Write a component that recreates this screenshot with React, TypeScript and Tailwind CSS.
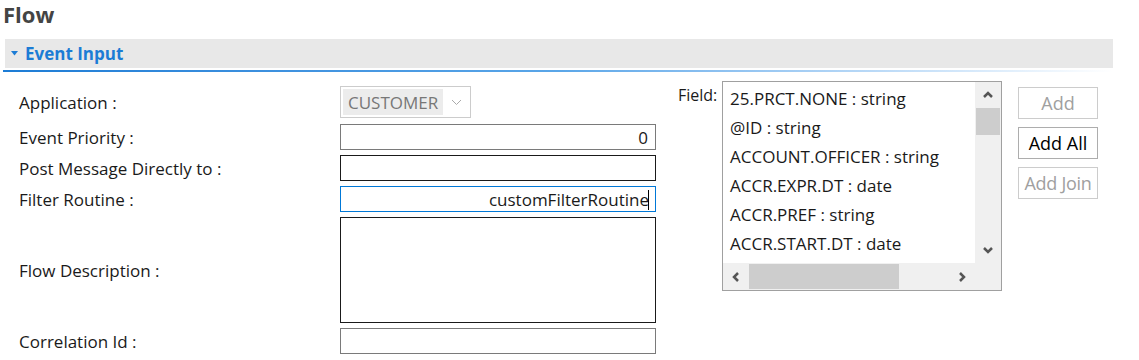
const font = { fontFamily: '"Segoe UI", "Open Sans", "Noto Sans", sans-serif' };

const fields = [
  "25.PRCT.NONE : string",
  "@ID : string",
  "ACCOUNT.OFFICER : string",
  "ACCR.EXPR.DT : date",
  "ACCR.PREF : string",
  "ACCR.START.DT : date",
];

function Chevron({ dir }: { dir: "up" | "down" | "left" | "right" }) {
  const d = {
    up: "M2 8 L6 4 L10 8",
    down: "M2 4 L6 8 L10 4",
    left: "M8 2 L4 6 L8 10",
    right: "M4 2 L8 6 L4 10",
  }[dir];
  return (
    <svg width="12" height="12" viewBox="0 0 12 12">
      <path d={d} fill="none" stroke="#555555" strokeWidth="2.5" />
    </svg>
  );
}

function Label({ children, h }: { children: string; h: string }) {
  return <div className={`flex items-center pt-[2px] ${h} text-[17px] text-[#1a1a1a]`}>{children}</div>;
}

export default function App() {
  return (
    <div className="w-[1139px] h-[360px] bg-white overflow-hidden text-[#1a1a1a]" style={font}>
      {/* Title */}
      <div className="h-[39px] pl-[3px] pt-[1px] text-[22px] font-bold text-[#444444] leading-[26px]">Flow</div>

      {/* Section header */}
      <div className="ml-[5px] w-[1108px] h-[29px] bg-[#e8e8e8] flex items-center gap-[7px] pl-[6px]">
        <svg width="7" height="5" viewBox="0 0 7 5">
          <path d="M0 0 L7 0 L3.5 4.5 Z" fill="#1c7cd5" />
        </svg>
        <span className="text-[17px] font-bold text-[#1c7cd5]">Event Input</span>
      </div>
      <div className="ml-[3px] mt-[2px] w-[1110px] h-[2px] bg-gradient-to-r from-[#1c7cd5] via-[#5aa6e8] to-[#ffffff]" />

      {/* Form body */}
      <div className="flex mt-[9px]">
        {/* Left form */}
        <div className="grid grid-cols-[321px_316px] pl-[19px] pt-[5px] gap-y-[5px]">
          <Label h="h-[32px]">Application :</Label>
          <div className="h-[32px] w-[131px] border border-[#cccccc] flex items-center pl-[2px] pr-[8px] justify-between">
            <span className="h-[26px] w-[100px] bg-[#ececec] text-[#777777] text-[17px] flex items-center pl-[5px] pt-[1px]">CUSTOMER</span>
            <svg width="11" height="7" viewBox="0 0 11 7">
              <path d="M1 1 L5.5 5.5 L10 1" fill="none" stroke="#aaaaaa" strokeWidth="1" />
            </svg>
          </div>

          <Label h="h-[26px] mt-[1px]">Event Priority :</Label>
          <div className="h-[26px] mt-[1px] border border-[#7a7a7a] flex items-center justify-end pr-[7px] pt-[1px] text-[17px]">0</div>

          <Label h="h-[26px]">Post Message Directly to :</Label>
          <div className="h-[26px] border border-[#1a1a1a]" />

          <Label h="h-[26px]">Filter Routine :</Label>
          <div className="h-[26px] border border-[#0078d7] flex items-center justify-end pr-[6px] pt-[1px] text-[17px]">
            <span>customFilterRoutine</span>
            <span className="w-px h-[20px] bg-black -ml-[1px]" />
          </div>

          <Label h="h-[106px]">Flow Description :</Label>
          <div className="h-[106px] border border-[#1a1a1a]" />

          <Label h="h-[26px]">Correlation Id :</Label>
          <div className="h-[26px] border border-[#7a7a7a]" />
        </div>

        {/* Field picker */}
        <div className="flex ml-[22px]">
          <div className="w-[44px] pt-[2px] text-[16px]">Field:</div>
          <div className="w-[280px] h-[210px] border border-[#a0a0a0] flex flex-col">
            <div className="flex flex-1 min-h-0">
              <div className="flex-1 pl-[7px] pt-[2px] text-[17px] leading-[29px] whitespace-nowrap overflow-hidden">
                {fields.map((f) => (
                  <div key={f}>{f}</div>
                ))}
              </div>
              <div className="w-[26px] bg-[#f0f0f0] flex flex-col items-center">
                <div className="h-[26px] flex items-center justify-center"><Chevron dir="up" /></div>
                <div className="w-[24px] h-[27px] bg-[#cdcdcd]" />
                <div className="flex-1" />
                <div className="h-[26px] flex items-center justify-center"><Chevron dir="down" /></div>
              </div>
            </div>
            <div className="h-[27px] flex bg-[#f0f0f0]">
              <div className="w-[26px] flex items-center justify-center"><Chevron dir="left" /></div>
              <div className="w-[150px] my-[1px] bg-[#cdcdcd]" />
              <div className="flex-1" />
              <div className="w-[26px] flex items-center justify-center"><Chevron dir="right" /></div>
              <div className="w-[26px]" />
            </div>
          </div>

          <div className="ml-[16px] pt-[6px] flex flex-col gap-[8px]">
            <div className="w-[80px] h-[32px] border border-[#cccccc] text-[#a0a0a0] flex items-center justify-center text-[18px]">Add</div>
            <div className="w-[80px] h-[32px] border border-[#adadad] text-black flex items-center justify-center text-[18px]">Add All</div>
            <div className="w-[80px] h-[32px] border border-[#cccccc] text-[#a0a0a0] flex items-center justify-center text-[18px] tracking-[-0.3px]">Add Join</div>
          </div>
        </div>
      </div>
    </div>
  );
}
